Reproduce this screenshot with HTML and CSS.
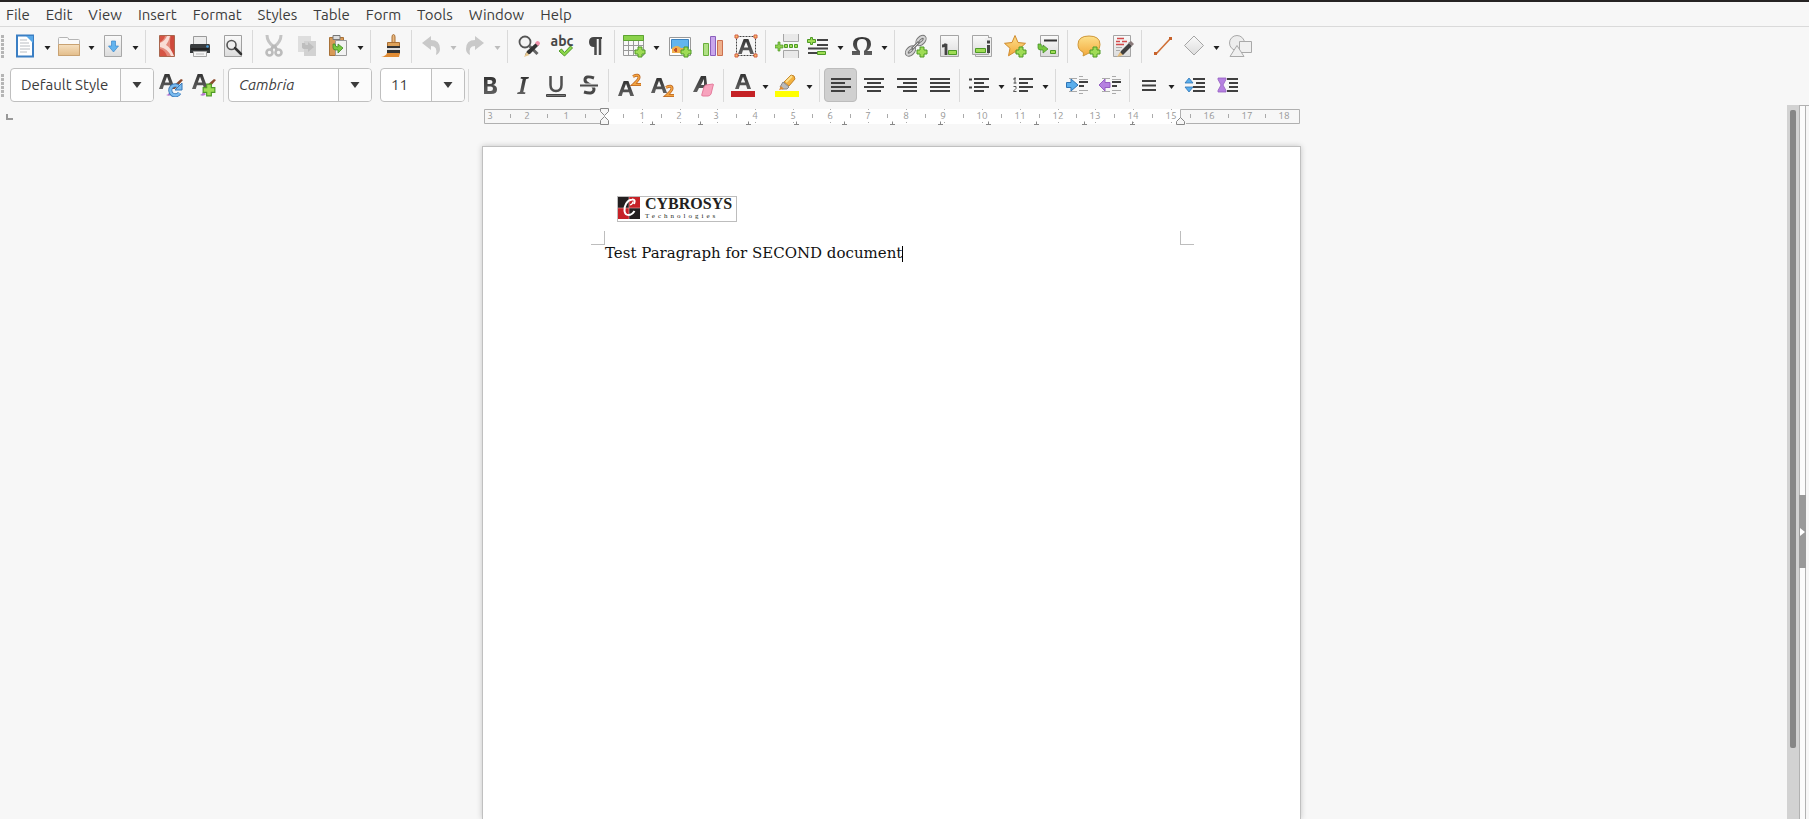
FILE: index.html
```html
<!DOCTYPE html>
<html lang="en">
<head>
<meta charset="utf-8">
<title>Writer</title>
<link rel="stylesheet" href="styles.css">
</head>
<body>
<svg class="defs" aria-hidden="true">
  <defs>
    <linearGradient id="g-dark" x1="0" y1="0" x2="0" y2="1"><stop offset="0" stop-color="#333"/><stop offset="1" stop-color="#606060"/></linearGradient>
    <linearGradient id="g-paper" x1="0" y1="0" x2="0" y2="1"><stop offset="0" stop-color="#fafafa"/><stop offset="1" stop-color="#dcdcdc"/></linearGradient>
    <linearGradient id="g-folder" x1="0" y1="0" x2="0" y2="1"><stop offset="0" stop-color="#f6e0c0"/><stop offset="1" stop-color="#e3bd8a"/></linearGradient>
    <linearGradient id="g-gold" x1="0" y1="0" x2="0" y2="1"><stop offset="0" stop-color="#fde08a"/><stop offset="1" stop-color="#f3a93c"/></linearGradient>
    <symbol id="plus" viewBox="0 0 12 12"><path d="M4 1h4v3h3v4H8v3H4V8H1V4h3z" fill="#9fdc55" stroke="#4e9a26"/></symbol>
    <symbol id="letter-a" viewBox="0 0 18 18"><path fill-rule="evenodd" d="M0 17 6 1h5l6 16h-4l-1.300-4H5.200L4 17zM6.200 10h4.600L8.500 4z" fill="url(#g-dark)"/></symbol>
    <symbol id="down" viewBox="0 0 6 4"><path d="M0 0h6L3 4z" fill="currentColor"/></symbol>
  </defs>
</svg>

<nav class="menubar" aria-label="Menu bar">
  <button>File</button><button>Edit</button><button>View</button><button>Insert</button><button>Format</button><button>Styles</button><button>Table</button><button>Form</button><button>Tools</button><button>Window</button><button>Help</button>
</nav>

<div class="toolbar toolbar-standard" role="toolbar" aria-label="Standard">
  <span class="grip"></span>
  <button class="tool tool-main" aria-label="New"><svg viewBox="0 0 24 24"><path d="M4 1.500h16v21H4z" fill="#fff" stroke="#3b7fc4" stroke-width="2"/><path d="M13 2h7v7z" fill="#58a8e8"/><path d="M7 6h7M7 9h9M7 12h10M7 15h10M7 18h7" stroke="#b9bdc2"/></svg></button>
  <button class="arrow" aria-label="New options"><svg><use href="#down"/></svg></button>
  <button class="tool tool-main" aria-label="Open"><svg viewBox="0 0 24 24"><path d="M1.500 22V4.500q0-1 1-1h8q1 0 1 2h10q1 0 1 1V22" fill="#fafafa" stroke="#b5b5b5"/><path d="M1.500 10.500h21v11h-21z" fill="url(#g-folder)" stroke="#c9a272"/></svg></button>
  <button class="arrow" aria-label="Open options"><svg><use href="#down"/></svg></button>
  <button class="tool tool-main" aria-label="Save"><svg viewBox="0 0 24 24"><path d="M3.500 1.500h17v21h-17z" fill="url(#g-paper)" stroke="#a8a8a8"/><path d="M10.500 7h4v5h3l-5 6-5-6h3z" fill="#62b3ee" stroke="#3a87cc" stroke-width=".7"/></svg></button>
  <button class="arrow" aria-label="Save options"><svg><use href="#down"/></svg></button>
  <span class="sep"></span>
  <button class="tool" aria-label="Export as PDF"><svg viewBox="0 0 24 24"><path d="M4.500 1.500h15v21h-15z" fill="#e58a7c" stroke="#a9674f"/><path d="M15.500 2h3.500v20h-2q-3-9-1.500-20z" fill="#cf4a3c"/><path d="M5 9q5-2 7-7h3q-1 5-4 9 5 3 8 11h-3q-3-7-11-9z" fill="#f9ddd6"/><path d="M5 2h5q-1 4-5 6zM5 15q5 1 7 7H5z" fill="#d65444"/></svg></button>
  <button class="tool" aria-label="Print"><svg viewBox="0 0 24 24"><path d="M5.500 2.500h13v8h-13z" fill="#ececec" stroke="#9a9a9a"/><path d="M3 10h18q1 0 1 2v7H2v-7q0-2 1-2z" fill="#393c3e"/><path d="M3 15h18" stroke="#222" stroke-width="2"/><circle cx="19.500" cy="12.500" r="1.300" fill="#4ba0e0"/><path d="M5.500 17.500h13v5h-13z" fill="#f5f5f5" stroke="#a5a5a5"/><path d="M8 20h8" stroke="#bbb"/></svg></button>
  <button class="tool" aria-label="Print preview"><svg viewBox="0 0 24 24"><path d="M3.500 1.500h17v21h-17z" fill="url(#g-paper)" stroke="#a0a0a0"/><circle cx="10.500" cy="11" r="4.500" fill="#eee" stroke="#555" stroke-width="1.600"/><path d="m14 14 6 6" stroke="#333" stroke-width="2.500" stroke-linecap="round"/></svg></button>
  <span class="sep"></span>
  <button class="tool" aria-label="Cut" disabled><svg viewBox="0 0 24 24"><path d="M5 1c0 5 3 9 7 12M19 1c0 5-3 9-7 12" fill="none" stroke="#c4c4c4" stroke-width="3"/><path d="m12 11-3 5m3-5 3 5" stroke="#b8b8b8" stroke-width="3"/><circle cx="7.500" cy="18.500" r="3" fill="none" stroke="#bcbcbc" stroke-width="2.600"/><circle cx="16.500" cy="18.500" r="3" fill="none" stroke="#bcbcbc" stroke-width="2.600"/></svg></button>
  <button class="tool" aria-label="Copy" disabled><svg viewBox="0 0 24 24"><path d="M3 2h13v16H3z" fill="#dedede"/><path d="M9 7h12v15H9z" fill="#d2d2d2"/><path d="M7 9v4q0 2 3 2h3v3l6-5-6-5v3h-2q-1 0-1-2z" fill="#bebebe"/></svg></button>
  <button class="tool tool-main" aria-label="Paste"><svg viewBox="0 0 24 24"><path d="M3.500 3.500h14v18h-14z" fill="#d79a57" stroke="#a87238"/><path d="M7 1.500h7v4H7z" fill="#ddd" stroke="#777"/><path d="M9.500 6.500h11v15h-11z" fill="#f2f2f2" stroke="#9b9b9b"/><path d="M7 10v4q0 2 3 2h2v3l5-5-5-4v3q-3 0-3-3z" fill="#78c840" stroke="#3f8a22" stroke-width=".8"/></svg></button>
  <button class="arrow" aria-label="Paste options"><svg><use href="#down"/></svg></button>
  <span class="sep"></span>
  <button class="tool" aria-label="Clone formatting"><svg viewBox="0 0 24 24"><path d="M12 9V3q0-2.500 1.500-2.500T15 3v6z" fill="#e8b880" stroke="#a96f34"/><path d="M7.500 8.500h12V13h-12z" fill="#dda159" stroke="#a96f34"/><path d="M7 12h13v3H7z" fill="#333"/><path d="M7 14h13v3H7z" fill="#ddd"/><path d="M7 16h13v4H7z" fill="#333"/><path d="M1 23q5-1 6-4h13l-1 4z" fill="#e08c35"/><path d="M8 19h12v-2H7z" fill="#333"/></svg></button>
  <span class="sep"></span>
  <button class="tool tool-main" aria-label="Undo" disabled><svg viewBox="0 0 24 24"><path d="M3 9l9-7v4q9 0 9 9 0 4-4 6 2-9-5-9v4z" fill="#c9c9c9"/></svg></button>
  <button class="arrow" aria-label="Undo list" disabled><svg><use href="#down"/></svg></button>
  <button class="tool tool-main" aria-label="Redo" disabled><svg viewBox="0 0 24 24"><path d="M21 9l-9-7v4q-9 0-9 9 0 4 4 6-2-9 5-9v4z" fill="#c9c9c9"/></svg></button>
  <button class="arrow" aria-label="Redo list" disabled><svg><use href="#down"/></svg></button>
  <span class="sep"></span>
  <button class="tool" aria-label="Find and replace"><svg viewBox="0 0 24 24"><circle cx="8" cy="8" r="5.500" fill="#f4f4f4" stroke="#555" stroke-width="1.800"/><path d="m12.500 12 8 8" stroke="#666" stroke-width="3"/><path d="m8 21 2-4 9-8 3 2-9 9z" fill="#333"/><path d="m18 9 2-2q3 0 3 3l-2 2z" fill="#ef8fa8"/><path d="m7 23 2.500-5 3 3z" fill="#e8c890"/></svg></button>
  <button class="tool" aria-label="Spelling"><svg viewBox="0 0 24 24"><text class="glyph" x="12" y="12">abc</text><path d="m9 17 2.500-2 3 3.500 6-6.500 2 2-8 8z" fill="#8ed84a" stroke="#4e9a26"/></svg></button>
  <button class="tool" aria-label="Formatting marks"><svg viewBox="0 0 24 24"><path d="M17 3v18M12.500 3v18" stroke="#4b4b4b" stroke-width="2.500"/><path d="M19 3h-8Q6 3 6 8t5 5h2V5h6z" fill="#454545"/></svg></button>
  <span class="sep"></span>
  <button class="tool tool-main" aria-label="Insert table"><svg viewBox="0 0 24 24"><path d="M1.500 1.500h20v20h-20z" fill="#f8f8f8" stroke="#999"/><path d="M1.500 6.500h20M1.500 11.500h20M1.500 16.500h20M6.500 7v15M11.500 7v15M16.500 7v15" stroke="#999"/><path d="M1.500 1.500h20v5h-20z" fill="#8bd24b" stroke="#5da532"/><use href="#plus" x="12" y="12" width="12" height="12"/></svg></button>
  <button class="arrow" aria-label="Table size"><svg><use href="#down"/></svg></button>
  <button class="tool" aria-label="Insert image"><svg viewBox="0 0 24 24"><path d="M1.500 3.500h21v18h-21z" fill="#fff" stroke="#999"/><path d="M3.500 5.500h17v9h-17z" fill="#62b5ee" stroke="#3c83c0"/><path d="M4 14q5-4 9 0h7v5H4z" fill="#f0b04e"/><path d="M6 16h3m-1-2v4" stroke="#c4502c" stroke-width="2"/><use href="#plus" x="12" y="12" width="12" height="12"/></svg></button>
  <button class="tool" aria-label="Insert chart"><svg viewBox="0 0 24 24"><path d="M2.500 9.500h5v12h-5z" fill="#b0e084" stroke="#6aaf3c"/><path d="M9.500 2.500h5v19h-5z" fill="#c9a6ec" stroke="#8b60bd"/><path d="M16.500 6.500h5v15h-5z" fill="#eeb08d" stroke="#cc7150"/></svg></button>
  <button class="tool" aria-label="Insert text box"><svg viewBox="0 0 24 24"><path d="M2.500 2.500h19v19h-19z" fill="none" stroke="#444" stroke-dasharray="2 1"/><use href="#letter-a" x="4" y="4" width="17" height="17"/><path d="M1 1h3v3H1zM20 1h3v3h-3zM1 20h3v3H1zM20 20h3v3h-3z" fill="#f5c36a" stroke="#d65a42"/></svg></button>
  <span class="sep"></span>
  <button class="tool" aria-label="Page break"><svg viewBox="0 0 24 24"><path d="M8.500 0v7.500h15V0M8.500 24v-7.500h15V24" fill="#e9e9e9" stroke="#a5a5a5"/><path d="M3 8h2v3h3v3H5v3H3v-3H0v-3h3z" fill="#8ed04e" stroke="#4e9a26" stroke-width=".7"/><path d="M9.500 10.500h3v3h-3zM14.500 10.500h3v3h-3zM19.500 10.500h3v3h-3z" fill="#9fdc55" stroke="#4e9a26"/></svg></button>
  <button class="tool tool-main" aria-label="Insert field"><svg viewBox="0 0 24 24"><path d="M11 6h11M11 11h11M2 14.500h20M2 19h9" stroke="#444" stroke-width="2"/><path d="M4.500 3.500h2v2h3v3h-3v2h-2v-2h-3v-3h3z" fill="#9fdc55" stroke="#4e9a26"/><path d="M11.500 17.500h8v3h-8z" fill="#9fdc55" stroke="#4e9a26"/></svg></button>
  <button class="arrow" aria-label="Field options"><svg><use href="#down"/></svg></button>
  <button class="tool tool-main" aria-label="Special character"><svg viewBox="0 0 24 24"><path d="M2 21v-4h5q-4-3-4-7 0-7 9-7t9 7q0 4-4 7h5v4h-8v-4q3-2 3-7t-5-5-5 5 3 7v4H2z" fill="url(#g-dark)"/></svg></button>
  <button class="arrow" aria-label="Character list"><svg><use href="#down"/></svg></button>
  <span class="sep"></span>
  <button class="tool" aria-label="Hyperlink"><svg viewBox="0 0 24 24"><g fill="none" stroke="#777" stroke-width="4"><ellipse cx="17" cy="6.500" rx="2.500" ry="4.500" transform="rotate(45 17 6.500)"/><ellipse cx="6.500" cy="17" rx="2.500" ry="4.500" transform="rotate(45 6.500 17)"/></g><g fill="none" stroke="#d5d5d5" stroke-width="2"><ellipse cx="17" cy="6.500" rx="2.500" ry="4.500" transform="rotate(45 17 6.500)"/><ellipse cx="6.500" cy="17" rx="2.500" ry="4.500" transform="rotate(45 6.500 17)"/></g><path d="m8 15 7-7" stroke="#777" stroke-width="3"/><path d="m9 14 5-5" stroke="#ddd"/><use href="#plus" x="12" y="12" width="12" height="12"/></svg></button>
  <button class="tool" aria-label="Footnote"><svg viewBox="0 0 24 24"><path d="M3.500 1.500h18v21h-18z" fill="url(#g-paper)" stroke="#a5a5a5"/><path d="M5 12q3 0 4-2v11" fill="none" stroke="#444" stroke-width="2.800"/><path d="M11.500 16.500h8v4h-8z" fill="#9fdc55" stroke="#4e9a26"/></svg></button>
  <button class="tool" aria-label="Endnote"><svg viewBox="0 0 24 24"><path d="M5.500 3.500h16v19h-16z" fill="#ededed" stroke="#a5a5a5"/><path d="M2.500 1.500h16v19h-16z" fill="url(#g-paper)" stroke="#a5a5a5"/><path d="M15 4h6v15h-6z" fill="#eee"/><path d="M18.500 6.500v3M18.500 11v8" stroke="#444" stroke-width="3"/><path d="M5.500 14.500h10v4h-10z" fill="#9fdc55" stroke="#4e9a26"/></svg></button>
  <button class="tool" aria-label="Bookmark"><svg viewBox="0 0 24 24"><path d="m12 1.500 3 7 7.500.800-5.500 5 1.500 7.500-6.500-4-6.500 4L7 14.300l-5.500-5L9 8.500z" fill="url(#g-gold)" stroke="#cf8a2e"/><use href="#plus" x="12" y="12" width="12" height="12"/></svg></button>
  <button class="tool" aria-label="Cross-reference"><svg viewBox="0 0 24 24"><path d="M4.500 1.500h18v21h-18z" fill="url(#g-paper)" stroke="#a5a5a5"/><path d="M8 6.500h13" stroke="#333" stroke-width="2"/><path d="M2 10v4q0 2 3 2h2v3l5-4-5-4v2q-2 0-2-3z" fill="#78c840" stroke="#3f8a22" stroke-width=".7"/><path d="M14.500 16.500h5v3h-5z" fill="#9fdc55" stroke="#4e9a26"/></svg></button>
  <span class="sep"></span>
  <button class="tool" aria-label="Comment"><svg viewBox="0 0 24 24"><path d="M12 2q11 0 11 8.500T12 19l-6 3q1-2 0-4-5-2-5-7.500Q1 2 12 2z" fill="url(#g-gold)" stroke="#cf9738"/><use href="#plus" x="12" y="12" width="12" height="12"/></svg></button>
  <button class="tool" aria-label="Track changes"><svg viewBox="0 0 24 24"><path d="M3.500 1.500h17v21h-17z" fill="url(#g-paper)" stroke="#a5a5a5"/><path d="M7 4.500h7M6 7.500h4M12 7.500h5M6 10.500h8" stroke="#d34a4a" stroke-width="1.500"/><path d="M6 13.500h6M6 16.500h4" stroke="#aaa"/><path d="m9 21 2-4 8-8 3 3-9 9z" fill="#404040"/><path d="m18 9 3-2 3 3-2 2z" fill="#8a7b7b"/><path d="m7 23 3-5 3 3z" fill="#e8bd78"/></svg></button>
  <span class="sep"></span>
  <button class="tool" aria-label="Line"><svg viewBox="0 0 24 24"><path d="M5 20 19 5" stroke="#cf6f35" stroke-width="1.600"/><path d="M3 18h3v3H3zM18 3h3v3h-3z" fill="#c7622b"/></svg></button>
  <button class="tool tool-main" aria-label="Diamond shape"><svg viewBox="0 0 24 24"><path d="m12 2 9.500 9.500L12 21l-9.500-9.500z" fill="url(#g-paper)" stroke="#a5a5a5"/></svg></button>
  <button class="arrow" aria-label="Basic shapes"><svg><use href="#down"/></svg></button>
  <button class="tool" aria-label="Draw functions"><svg viewBox="0 0 24 24"><circle cx="9" cy="9" r="7.500" fill="#ededed" stroke="#a9a9a9"/><path d="M11.500 7.500h12v11h-12z" fill="#f0f0f0" stroke="#a9a9a9"/><path d="M9 11.500 2 22.500h14z" fill="#f0f0f0" stroke="#a9a9a9"/></svg></button>
</div>

<div class="toolbar toolbar-format" role="toolbar" aria-label="Formatting">
  <span class="grip"></span>
  <div class="combo combo-wide"><input type="text" aria-label="Paragraph style" value="Default Style"><button aria-label="Show styles"><svg><use href="#down"/></svg></button></div>
  <button class="tool" aria-label="Update style"><svg viewBox="0 0 24 24"><use href="#letter-a" x="0" y="0" width="17" height="17"/><path d="m12 15 10-9 2 1-8 9z" fill="#8b4a2e"/><path d="M10 20q-1 2-3 2 4 2 6-1z" fill="#b678d0"/><path d="M20 14a5 5 0 1 0 .500 6" fill="none" stroke="#3878b8" stroke-width="4"/><path d="M20 14a5 5 0 1 0 .500 6" fill="none" stroke="#7bbcf0" stroke-width="2.400"/><path d="M16 17h7v-7z" fill="#7bbcf0" stroke="#3878b8"/></svg></button>
  <button class="tool" aria-label="New style"><svg viewBox="0 0 24 24"><use href="#letter-a" x="0" y="0" width="17" height="17"/><path d="m13 14 9-8 2 1-7 8z" fill="#8b4a2e"/><path d="M11 19q-1 3-3 3 4 2 6-1z" fill="#b678d0"/><use href="#plus" x="10" y="10" width="14" height="14"/></svg></button>
  <span class="sep"></span>
  <div class="combo combo-wide combo-font"><input type="text" aria-label="Font name" value="Cambria"><button aria-label="Show fonts"><svg><use href="#down"/></svg></button></div>
  <div class="combo combo-size"><input type="text" aria-label="Font size" value="11"><button aria-label="Show sizes"><svg><use href="#down"/></svg></button></div>
  <span class="sep"></span>
  <button class="tool" aria-label="Bold"><svg viewBox="0 0 24 24"><path fill-rule="evenodd" d="M6 4h7q5 0 5 4 0 3-3 4 4 .500 4 4.500 0 4.500-6 4.500H6zm3.500 3v4H12q2.500 0 2.500-2T12 7zm0 6.500V18h3q2.500 0 2.500-2.300t-2.500-2.200z" fill="url(#g-dark)"/></svg></button>
  <button class="tool" aria-label="Italic"><svg viewBox="0 0 24 24"><path d="M10 4h8l-.500 1.500-2.500.700L12.300 19l2.200.500L14 21H6l.500-1.500 2.500-.700L11.700 6l-2.200-.500z" fill="url(#g-dark)"/></svg></button>
  <button class="tool" aria-label="Underline"><svg viewBox="0 0 24 24"><path d="M6.500 3v9q0 6 5.500 6t5.500-6V3" fill="none" stroke="#505050" stroke-width="2.500"/><path d="M2.500 21.500h19v2h-19z" fill="#777" stroke="#444"/></svg></button>
  <button class="tool" aria-label="Strikethrough"><svg viewBox="0 0 24 24"><path d="M17 5q-9-3-9 2 0 2.500 4.500 4.500T17 16q0 6-10 3" fill="none" stroke="#484848" stroke-width="3"/><path d="M3 12.500h18" stroke="#eee" stroke-width="4"/><path d="M3 12.500h18" stroke="#4c4c4c" stroke-width="2"/></svg></button>
  <span class="sep"></span>
  <button class="tool" aria-label="Superscript"><svg viewBox="0 0 24 24"><use href="#letter-a" x="0" y="7" width="17" height="17"/><path d="M15 3.500q6-3 6 1 0 2-5.500 7H23" fill="none" stroke="#b96422" stroke-width="3"/><path d="M15 3.500q6-3 6 1 0 2-5.500 7H23" fill="none" stroke="#f3a440" stroke-width="1.600"/></svg></button>
  <button class="tool" aria-label="Subscript"><svg viewBox="0 0 24 24"><use href="#letter-a" x="0" y="4" width="17" height="17"/><path d="M15 14.500q6-3 6 1 0 2-5.500 7H23" fill="none" stroke="#b96422" stroke-width="3"/><path d="M15 14.500q6-3 6 1 0 2-5.500 7H23" fill="none" stroke="#f3a440" stroke-width="1.600"/></svg></button>
  <span class="sep"></span>
  <button class="tool" aria-label="Clear formatting"><svg viewBox="0 0 24 24"><path fill-rule="evenodd" d="M1 19 9 3h5l2 16h-4v-4H7l-2 4zm8-7h3V6z" fill="url(#g-dark)"/><path d="m14 12 7-1q1 0 0 2l-2 8q-1 2-3 2h-5q-2 0-1-2l2-7q1-2 2-2z" fill="#f7a3bd" stroke="#e57b9c"/></svg></button>
  <span class="sep"></span>
  <button class="tool tool-main" aria-label="Font color"><svg viewBox="0 0 24 24"><use href="#letter-a" x="4" y="0" width="17" height="17"/><path d="M0 18h24v6H0z" fill="#c52226"/></svg></button>
  <button class="arrow" aria-label="Font colors"><svg><use href="#down"/></svg></button>
  <button class="tool tool-main" aria-label="Highlighting"><svg viewBox="0 0 24 24"><path d="m9 9 7-7q4 0 4 4l-6 7z" fill="#f4b23f" stroke="#c2842b"/><path d="m11 9 6-6" stroke="#fce18d" stroke-width="2"/><path d="m8 9 6 5-2 2-5 0-2-2z" fill="#bbb" stroke="#888"/><path d="m4 17 2-4 3 3z" fill="#de8b30"/><path d="M0 18h24v6H0z" fill="#ff0"/></svg></button>
  <button class="arrow" aria-label="Highlight colors"><svg><use href="#down"/></svg></button>
  <span class="sep"></span>
  <button class="tool pressed" aria-label="Align left" aria-pressed="true"><svg viewBox="0 0 24 24"><path class="lines" d="M2 6h20M2 10h14M2 14h20M2 18h14"/></svg></button>
  <button class="tool" aria-label="Center"><svg viewBox="0 0 24 24"><path class="lines" d="M2 6h20M5 10h14M2 14h20M5 18h14"/></svg></button>
  <button class="tool" aria-label="Align right"><svg viewBox="0 0 24 24"><path class="lines" d="M2 6h20M8 10h14M2 14h20M8 18h14"/></svg></button>
  <button class="tool" aria-label="Justify"><svg viewBox="0 0 24 24"><path class="lines" d="M2 6h20M2 10h20M2 14h20M2 18h20"/></svg></button>
  <span class="sep"></span>
  <button class="tool tool-main" aria-label="Bullets"><svg viewBox="0 0 24 24"><path class="lines" d="M7 6h15M7 10h10M7 14h15M7 18h10"/><path d="M2 5.500h3v2H2zM2 13.500h3v2H2z" fill="#444"/></svg></button>
  <button class="arrow" aria-label="Bullet styles"><svg><use href="#down"/></svg></button>
  <button class="tool tool-main" aria-label="Numbering"><svg viewBox="0 0 24 24"><path class="lines" d="M8 6h14M8 10h9M8 14h14M8 18h9"/><path d="M2 6h2V4.500M4 4.500v6M2.500 10h3M2.500 13.500h2.500v2L2.500 18v.500h3" fill="none" stroke="#555"/></svg></button>
  <button class="arrow" aria-label="Numbering styles"><svg><use href="#down"/></svg></button>
  <span class="sep"></span>
  <button class="tool" aria-label="Increase indent"><svg viewBox="0 0 24 24"><path d="M4 5.500h8M4 18.500h8M14 3.500h4M14 6.500h9M14 17.500h9M14 20.500h4" stroke="#aaa"/><path class="lines" d="M14 9h9M14 13h5"/><path d="M1.500 9.500H6V6l7 6-7 6v-3.500H1.500z" fill="#5aaeec" stroke="#2f74b5"/></svg></button>
  <button class="tool" aria-label="Decrease indent"><svg viewBox="0 0 24 24"><path d="M4 5.500h8M4 18.500h8M14 3.500h4M14 6.500h9M14 17.500h9M14 20.500h4" stroke="#aaa"/><path class="lines" d="M14 9h9M14 13h5"/><path d="M12 9.500H7V6l-6 6 6 6v-3.500h5z" fill="#b580e0" stroke="#955fc2"/></svg></button>
  <span class="sep"></span>
  <button class="tool tool-main" aria-label="Line spacing"><svg viewBox="0 0 24 24"><path class="lines" d="M5 8h14M5 12.500h14M5 17h14"/></svg></button>
  <button class="arrow" aria-label="Spacing options"><svg><use href="#down"/></svg></button>
  <button class="tool" aria-label="Increase paragraph spacing"><svg viewBox="0 0 24 24"><path class="lines" d="M10 6h12M13 10h9M10 14h12M10 18h12"/><path d="m2 10 4-5 4 5zM2 14l4 5 4-5z" fill="#5aaeec" stroke="#2f74b5" stroke-width=".8"/></svg></button>
  <button class="tool" aria-label="Decrease paragraph spacing"><svg viewBox="0 0 24 24"><path class="lines" d="M11 6h11M13 10h9M13 14h9M11 18h11"/><path d="M2 5h8v1.500L7 12l3 5.500V19H2v-1.500L5 12 2 6.500z" fill="#b580e0" stroke="#955fc2" stroke-width=".8"/></svg></button>
</div>

<main class="workspace">
  <div class="editor">
    <div class="ruler-row">
      <button class="tab-kind" aria-label="Tab type"></button>
      <svg class="ruler" viewBox="0 0 819 18" role="img" aria-label="Ruler">
        <path d="M122 1h576v15H122z" fill="#fff"/>
        <path d="M122 1.500H2.500v14H122M698.500 12V1.500h119v14H704" fill="none" stroke="#b0b0b0"/>
        <path d="M28.500 6v4M65.500 6v4M103.500 6v4M141.500 6v4M179.500 6v4M216.500 6v4M254.500 6v4M292.500 6v4M330.500 6v4M368.500 6v4M405.500 6v4M443.500 6v4M481.500 6v4M519.500 6v4M557.500 6v4M594.500 6v4M632.500 6v4M670.500 6v4M708.500 6v4M746.500 6v4M783.500 6v4" stroke="#aaa"/>
        <path d="M160.500 1v1m0 12v1M198.500 1v1m0 12v1M235.500 1v1m0 12v1M273.500 1v1m0 12v1M311.500 1v1m0 12v1M348.500 1v1m0 12v1M386.500 1v1m0 12v1M424.500 1v1m0 12v1M462.500 1v1m0 12v1M500.500 1v1m0 12v1M538.500 1v1m0 12v1M576.500 1v1m0 12v1M613.500 1v1m0 12v1M651.500 1v1m0 12v1M689.500 1v1m0 12v1" stroke="#aaa"/>
        <path d="M168 16.500h5m-2.500-3v3M216 16.500h5m-2.500-3v3M264 16.500h5m-2.500-3v3M312 16.500h5m-2.500-3v3M360 16.500h5m-2.500-3v3M408 16.500h5m-2.500-3v3M456 16.500h5m-2.500-3v3M504 16.500h5m-2.500-3v3M552 16.500h5m-2.500-3v3M600 16.500h5m-2.500-3v3M648 16.500h5m-2.500-3v3" stroke="#888" fill="none"/>
        <path d="M118.500.500h8v3l-4 4-4-4zM118.500 16.500h8v-4l-4-4-4 4zM694.500 16.500h8v-3l-4-4-4 4z" fill="#f7f7f7" stroke="#888"/>
        <g class="ruler-numbers">
          <text x="8" y="11">3</text><text x="45" y="11">2</text><text x="84" y="11">1</text>
          <text x="160" y="11">1</text><text x="197" y="11">2</text><text x="234" y="11">3</text><text x="273" y="11">4</text><text x="311" y="11">5</text><text x="348" y="11">6</text><text x="386" y="11">7</text><text x="424" y="11">8</text><text x="461" y="11">9</text><text x="500" y="11">10</text><text x="538" y="11">11</text><text x="576" y="11">12</text><text x="613" y="11">13</text><text x="651" y="11">14</text><text x="689" y="11">15</text><text x="727" y="11">16</text><text x="765" y="11">17</text><text x="802" y="11">18</text>
        </g>
      </svg>
    </div>
    <article class="page">
      <header class="page-header">
        <div class="brand">
          <svg class="brand-mark" viewBox="0 0 22 22" aria-hidden="true"><path d="M0 0h11v11H0z" fill="#231f20"/><path d="M11 0h11v11H11zM0 11h11v11H0z" fill="#c62127"/><path d="M11 11h11v11H11z" fill="#231f20"/><path d="M11 0v22M0 11h22" stroke="#e8b0b0" stroke-width=".6"/><path d="M16 7q2-5-2-4.500C9 3 6 9 6.500 14q.500 4 4 4 3.500 0 6-4" fill="none" stroke="#fff" stroke-width="2"/><path d="M12 8q3-1 3-3.500" fill="none" stroke="#fff" stroke-width="1.200"/></svg>
          <div class="brand-words"><span class="brand-name">CYBROSYS</span><span class="brand-tag">Technologies</span></div>
        </div>
      </header>
      <div class="page-body">
        <span class="corner corner-left"></span>
        <span class="corner corner-right"></span>
        <p>Test Paragraph for SECOND document<span class="caret"></span></p>
      </div>
    </article>
  </div>
  <div class="scrollbar"><div class="thumb"></div></div>
  <div class="splitter"><button aria-label="Show sidebar"><svg viewBox="0 0 5 8"><path d="M0 0v8l5-4z" fill="#fff"/></svg></button></div>
</main>
</body>
</html>
```
FILE: styles.css
```css
* { box-sizing: border-box; }

body {
  margin: 0;
  height: 100vh;
  display: flex;
  flex-direction: column;
  overflow: hidden;
  border-top: 2px solid #262424;
  background: #f7f7f7;
  color: #3c3c3c;
  font: 15px/20px "Ubuntu", "Noto Sans", sans-serif;
}

button, input { font: inherit; color: inherit; }
button { border: 0; padding: 0; background: none; }
.defs { position: absolute; width: 0; height: 0; }

/* Menus */
.menubar {
  display: flex;
  flex: none;
  height: 25px;
  border-bottom: 1px solid #dadada;
}
.menubar button { padding: 1px 10px 0 6px; }

/* Toolbars */
.toolbar {
  display: flex;
  flex: none;
  align-items: center;
  height: 39px;
}
.toolbar-standard { padding-bottom: 1px; }
.toolbar-format { padding-bottom: 1px; }
.grip {
  width: 3px;
  height: 23px;
  margin: 0 6px 0 1px;
  background: repeating-linear-gradient(#b5b5b5 0 3px, transparent 3px 4px);
}
.tool {
  display: flex;
  flex: none;
  align-items: center;
  justify-content: center;
  width: 33px;
  height: 34px;
}
.tool svg { width: 24px; height: 24px; }
.tool-main { width: 30px; }
.pressed {
  background: #d0d0d0;
  border: 1px solid #bcbcbc;
  border-radius: 4px;
}
.arrow {
  display: flex;
  flex: none;
  align-items: center;
  justify-content: center;
  width: 14px;
  height: 34px;
  padding-top: 3px;
  color: #222;
}
.arrow:disabled { color: #bdbdbd; }
.arrow svg { width: 7px; height: 4px; }
.sep {
  flex: none;
  width: 1px;
  height: 33px;
  margin: 0 4px 0 3px;
  background: #dadada;
}
.lines { stroke: #404040; stroke-width: 2; fill: none; }
.glyph {
  font: bold 14px "Ubuntu", "Noto Sans", sans-serif;
  fill: #454545;
  text-anchor: middle;
}

.combo {
  display: flex;
  flex: none;
  height: 34px;
  border: 1px solid #bfbfbf;
  border-radius: 4px;
  background: #fff;
  overflow: hidden;
}
.combo input {
  flex: 1;
  min-width: 0;
  border: 0;
  padding: 0 10px;
  background: none;
}
.combo button {
  display: flex;
  align-items: center;
  justify-content: center;
  width: 33px;
  border-left: 1px solid #bfbfbf;
  background: #fbfbfb;
}
.combo button svg { width: 10px; height: 6px; }
.combo-wide { width: 144px; }
.combo-font input { font-style: italic; }
.combo-size { width: 85px; margin-left: 8px; }

/* Document area */
.workspace {
  display: flex;
  flex: 1;
  min-height: 0;
}
.editor {
  display: flex;
  flex: 1;
  flex-direction: column;
  align-items: center;
  padding-right: 4px;
  overflow: hidden;
}
.ruler-row {
  position: relative;
  display: flex;
  flex: none;
  justify-content: center;
  width: 100%;
  padding: 3px 0 20px;
}
.ruler { width: 819px; height: 18px; }
.ruler-numbers {
  font: 10px "Ubuntu", "Noto Sans", sans-serif;
  fill: #999;
  text-anchor: middle;
}
.tab-kind {
  position: absolute;
  left: 6px;
  top: 9px;
  width: 7px;
  height: 6px;
  border-left: 2px solid #999;
  border-bottom: 2px solid #999;
}
.page {
  flex: 1;
  width: 819px;
  padding: 49px 120px 0 122px;
  border: 1px solid #c0c0c0;
  border-bottom: 0;
  background: #fff;
  box-shadow: 0 0 6px rgba(0, 0, 0, .2);
}
.page-header { padding-left: 12px; }
.brand {
  display: flex;
  gap: 5px;
  width: 120px;
  height: 26px;
  border: 1px solid #bdbdbd;
  color: #231f20;
  font-family: "Liberation Serif", "Times New Roman", serif;
}
.brand-mark { flex: none; width: 22px; height: 22px; }
.brand-words { display: flex; flex-direction: column; }
.brand-name { font-size: 16px; font-weight: bold; line-height: 13px; }
.brand-tag { font-size: 7px; line-height: 12px; letter-spacing: 3px; }
.page-body { position: relative; padding-top: 21px; }
.page-body p {
  margin: 0;
  color: #111;
  font: 15px/20px "DejaVu Serif", serif;
}
.caret {
  display: inline-block;
  width: 1px;
  height: 16px;
  vertical-align: middle;
  background: #000;
}
.corner {
  position: absolute;
  top: 9px;
  width: 14px;
  height: 14px;
  border-bottom: 1px solid #bdbdbd;
}
.corner-left { left: -14px; border-right: 1px solid #bdbdbd; }
.corner-right { right: -14px; border-left: 1px solid #bdbdbd; }

.scrollbar {
  flex: none;
  width: 12px;
  padding: 5px 3px 0;
  background: #d2d2d2;
}
.thumb { height: 90%; border-radius: 2px; background: #868686; }
.splitter {
  display: flex;
  flex: none;
  align-items: center;
  width: 10px;
  padding-top: 138px;
  border-top: 1px solid #b1b1b1;
  background: linear-gradient(90deg, #b1b1b1 1px, #fbfbfb 1px 6px, #b1b1b1 6px 7px, #f7f7f7 7px);
}
.splitter button {
  display: flex;
  align-items: center;
  width: 7px;
  height: 73px;
  padding-left: 1px;
  background: #999;
}
.splitter svg { width: 5px; height: 8px; }
```
